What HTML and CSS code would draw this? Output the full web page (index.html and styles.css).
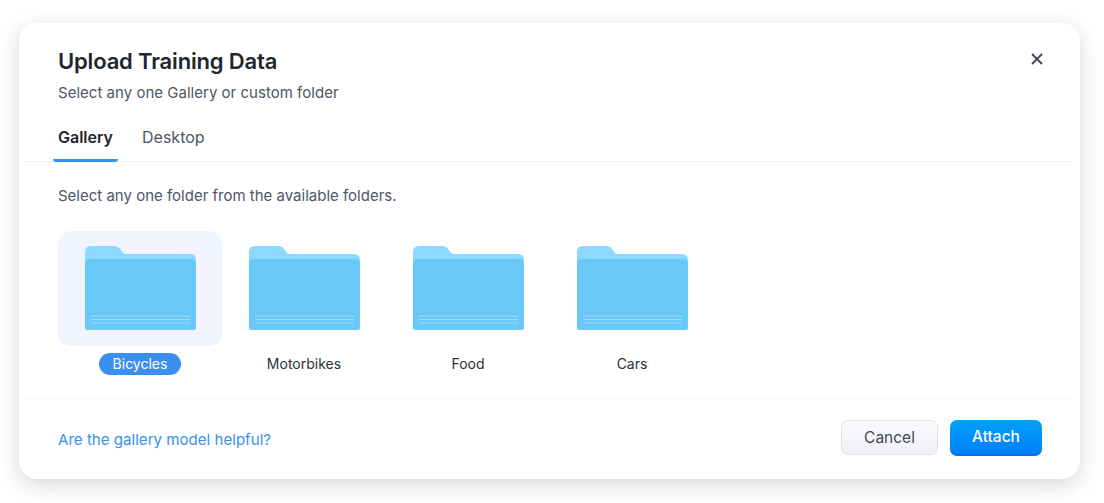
FILE: index.html
```html
<!DOCTYPE html>
<html lang="en">
<head>
<meta charset="UTF-8">
<meta name="viewport" content="width=device-width, initial-scale=1.0">
<title>Upload Training Data</title>
<link rel="stylesheet" href="styles.css">
</head>
<body>

<svg class="defs" width="0" height="0">
  <symbol id="folder" viewBox="0 0 111 84">
    <path d="M0 6Q0 0 6 0H29Q33 0 35 3L38 7Q39 8 41 8H105Q111 8 111 14V40H0Z" fill="#8dd8ff"/>
    <path d="M0 18Q0 13 5 13H106Q111 13 111 18V82Q111 84 109 84H2Q0 84 0 82Z" fill="#69c8f8"/>
    <path d="M6 70H105M6 73.500H105M6 77H105" stroke="#9adcfb" stroke-width="1" fill="none"/>
  </symbol>
</svg>

<div class="modal">
  <div class="header">
    <div>
      <h1>Upload Training Data</h1>
      <p class="subtitle">Select any one Gallery or custom folder</p>
    </div>
    <svg class="close" width="12" height="12" viewBox="0 0 12 12">
      <path d="M1 1L11 11M11 1L1 11" stroke="#3f4657" stroke-width="1.800" fill="none"/>
    </svg>
  </div>

  <div class="tabs">
    <span class="tab active">Gallery</span>
    <span class="tab">Desktop</span>
  </div>

  <div class="content">
    <p class="hint">Select any one folder from the available folders.</p>
    <div class="folders">
      <div class="folder selected">
        <div class="thumb"><svg width="111" height="84"><use href="#folder"/></svg></div>
        <span class="name">Bicycles</span>
      </div>
      <div class="folder">
        <div class="thumb"><svg width="111" height="84"><use href="#folder"/></svg></div>
        <span class="name">Motorbikes</span>
      </div>
      <div class="folder">
        <div class="thumb"><svg width="111" height="84"><use href="#folder"/></svg></div>
        <span class="name">Food</span>
      </div>
      <div class="folder">
        <div class="thumb"><svg width="111" height="84"><use href="#folder"/></svg></div>
        <span class="name">Cars</span>
      </div>
    </div>
  </div>

  <div class="footer">
    <a class="feedback">Are the gallery model helpful?</a>
    <div class="actions">
      <button class="btn cancel">Cancel</button>
      <button class="btn attach">Attach</button>
    </div>
  </div>
</div>

</body>
</html>
```

FILE: styles.css
```css
body {
  font-family: Inter, "Noto Sans", sans-serif;
  background-color: #fff;
  color: #22252c;
  margin: 0;
  height: 503px;
  overflow: hidden;
}

.defs {
  display: block;
}

.modal {
  width: 1061px;
  height: 456px;
  margin: 23px 0 0 19px;
  background-color: #fff;
  border-radius: 18px;
  box-shadow: 0 6px 22px rgba(0, 0, 0, 0.16);
  display: flex;
  flex-direction: column;
}

.header {
  display: flex;
  justify-content: space-between;
  align-items: flex-start;
  padding: 24px 37px 0 39px;
}

h1 {
  font-size: 22px;
  line-height: 28px;
  font-weight: 600;
  letter-spacing: -0.16px;
  margin: 0;
}

.subtitle {
  font-size: 15px;
  line-height: 20px;
  letter-spacing: 0.02px;
  color: #4f5566;
  margin: 8px 0 0;
}

.close {
  margin-top: 6px;
}

.tabs {
  display: flex;
  margin: 20px 8px 0 6px;
  padding-left: 28px;
  border-bottom: 1px solid #f1f2f4;
  height: 38px;
}

.tab {
  font-size: 16px;
  line-height: 20px;
  padding: 4px 5px 0;
  margin-right: 19px;
  color: #4f5566;
  height: 39px;
  box-sizing: border-box;
}

.tab.active {
  color: #22252c;
  font-weight: 600;
  border-bottom: 3px solid #3b8ff0;
  border-radius: 3px;
}

.content {
  padding: 0 0 0 39px;
  height: 236px;
}

.hint {
  font-size: 15px;
  line-height: 20px;
  color: #4f5566;
  margin: 24px 0 0;
}

.folders {
  display: flex;
  margin-top: 25px;
}

.folder {
  width: 164px;
  display: flex;
  flex-direction: column;
  align-items: center;
}

.thumb {
  width: 164px;
  height: 115px;
  border-radius: 13px;
  display: flex;
  justify-content: center;
  padding-top: 15px;
  box-sizing: border-box;
}

.thumb svg {
  display: block;
}

.folder.selected .thumb {
  background-color: #f1f4fe;
}

.name {
  font-size: 14px;
  line-height: 22px;
  margin-top: 7px;
  padding: 0 14px;
  border-radius: 11px;
  color: #2c3038;
}

.folder.selected .name {
  background-color: #3b8ff0;
  color: #fff;
}

.footer {
  margin: 0 8px 0 6px;
  padding: 0 30px 3px 33px;
  border-top: 1px solid #f7f7f8;
  flex: 1;
  display: flex;
  justify-content: space-between;
  align-items: center;
}

.feedback {
  font-size: 15.1px;
  color: #3b8ff0;
  margin-top: 3px;
}

.actions {
  display: flex;
  align-items: center;
  gap: 12px;
}

.btn {
  font-family: Inter, "Noto Sans", sans-serif;
  font-size: 15.5px;
  border-radius: 7px;
  cursor: pointer;
}

.cancel {
  width: 97px;
  height: 35px;
  color: #3f4657;
  background: linear-gradient(#fafbfd, #eef0f6);
  border: 1px solid #dfe2ea;
}

.attach {
  width: 92px;
  height: 36px;
  color: #fff;
  font-weight: 500;
  border: none;
  background: linear-gradient(#00a0fa, #0080fa);
  border-bottom: 2px solid #0a6fd8;
}
```
